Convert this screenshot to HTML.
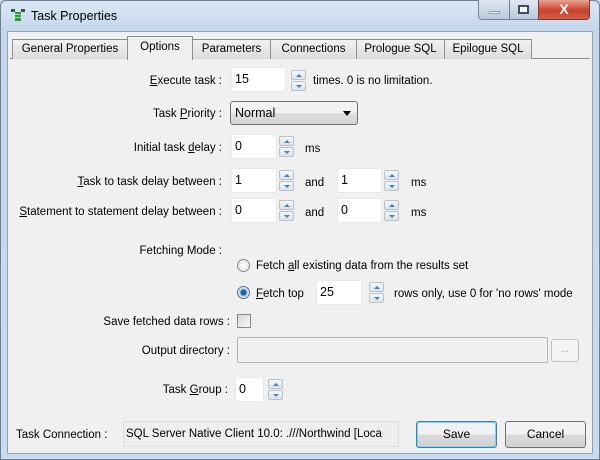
<!DOCTYPE html>
<html><head><style>
*{margin:0;padding:0;box-sizing:border-box}
body{width:600px;height:460px;overflow:hidden;background:#c9dbee;font-family:"Liberation Sans",sans-serif;font-size:11.5px;line-height:17px;color:#000;position:relative}
.a{position:absolute;white-space:nowrap}
.r{text-align:right}
.in{position:absolute;background:#fff;border:1px solid #e6e9ee;padding:2px 3px;font-size:12.5px;line-height:18px}
.sp{position:absolute;width:15px}
.sp div{height:10px;border:1px solid #b8c2cc;background:linear-gradient(#f4f6f8,#dde3ea);border-radius:2px;margin-bottom:1px;position:relative}
.sp div:after{content:"";position:absolute;left:4px;top:3px;border-left:3px solid transparent;border-right:3px solid transparent}
.sp .u:after{border-bottom:3px solid #4a7fb8}
.sp .d:after{border-top:3px solid #4a7fb8}
.tab{position:absolute;top:39px;height:20px;border:1px solid #8d8d8d;border-bottom:none;background:linear-gradient(#f2f2f2,#dcdcdc);text-align:center;line-height:19px}
.btn{position:absolute;border:1px solid #707070;border-radius:3px;background:linear-gradient(#f2f2f2 50%,#dcdcdc 50%,#cfcfcf);text-align:center;font-size:12px}
u{text-decoration:underline}
</style></head><body>
<div class="a" style="left:0;top:0;width:600px;height:460px;border:1px solid #6b7f95;border-radius:6px 6px 0 0;background:linear-gradient(#dbe8f6,#c3d6ec 30px,#c9dbee)"></div>
<svg class="a" style="left:10px;top:8px" width="16" height="14"><rect x="5" y="4" width="6" height="9" fill="#2f9a3a"/><rect x="5" y="6" width="6" height="1" fill="#9fe08f"/><rect x="5" y="9" width="6" height="1" fill="#9fe08f"/><rect x="1" y="1" width="4" height="3" fill="#2c5b3a"/><rect x="11" y="1" width="4" height="3" fill="#2c5b3a"/></svg>
<div class="a" style="left:31px;top:8px;font-size:12.5px">Task Properties</div>
<div class="a" style="left:478px;top:0;width:32px;height:20px;border:1px solid #6f829a;border-top:none;border-radius:0 0 0 4px;background:linear-gradient(#dfe8f2,#b9c9da)"><div class="a" style="left:10px;top:11px;width:11px;height:3px;background:#fff;border:1px solid #8a9bb0"></div></div>
<div class="a" style="left:510px;top:0;width:28px;height:20px;border-bottom:1px solid #6f829a;background:linear-gradient(#dfe8f2,#b9c9da)"><div class="a" style="left:8px;top:5px;width:11px;height:9px;border:2px solid #3c4c62;background:#fff"></div></div>
<div class="a" style="left:538px;top:0;width:52px;height:20px;border:1px solid #7a3a2e;border-top:none;border-radius:0 0 4px 0;background:linear-gradient(#e8a493,#c7402a 55%,#d7604a);color:#fff;font-weight:bold;font-size:14px;text-align:center;line-height:18px">X</div>
<div class="a" style="left:7px;top:31px;width:586px;height:423px;background:#f0f0f0;border:1px solid #8fa3b9"></div>
<div class="a" style="left:10px;top:58px;width:580px;height:1px;background:#8d8d8d"></div>
<div class="tab" style="left:12px;width:116px">General Properties</div>
<div class="tab" style="left:192px;width:79px">Parameters</div>
<div class="tab" style="left:270px;width:87px">Connections</div>
<div class="tab" style="left:356px;width:89px">Prologue SQL</div>
<div class="tab" style="left:444px;width:88px">Epilogue SQL</div>
<div class="tab" style="left:127px;top:36px;height:24px;width:66px;background:#f0f0f0;line-height:20px">Options</div>

<div class="a r" style="right:378px;top:73px"><u>E</u>xecute task :</div>
<div class="in" style="left:231px;top:67px;width:55px;height:25px">15</div>
<div class="sp" style="left:291px;top:70px"><div class="u"></div><div class="d"></div></div>
<div class="a" style="left:313px;top:73px">times. 0 is no limitation.</div>

<div class="a r" style="right:378px;top:106px">Task <u>P</u>riority :</div>
<div class="a" style="left:230px;top:101px;width:128px;height:24px;border:1px solid #707070;border-radius:3px;background:linear-gradient(#f2f2f2 50%,#e0e0e0 50%,#d4d4d4);padding:4px 4px;font-size:12.5px;line-height:15px">Normal<span class="a" style="right:6px;top:9px;border-left:4px solid transparent;border-right:4px solid transparent;border-top:5px solid #000"></span></div>

<div class="a r" style="right:378px;top:140px">Initial task <u>d</u>elay :</div>
<div class="in" style="left:231px;top:134px;width:46px;height:25px">0</div>
<div class="sp" style="left:279px;top:136px"><div class="u"></div><div class="d"></div></div>
<div class="a" style="left:305px;top:141px">ms</div>

<div class="a r" style="right:378px;top:174px"><u>T</u>ask to task delay between :</div>
<div class="in" style="left:231px;top:168px;width:46px;height:25px">1</div>
<div class="sp" style="left:279px;top:170px"><div class="u"></div><div class="d"></div></div>
<div class="a" style="left:305px;top:175px">and</div>
<div class="in" style="left:337px;top:168px;width:45px;height:25px">1</div>
<div class="sp" style="left:384px;top:170px"><div class="u"></div><div class="d"></div></div>
<div class="a" style="left:411px;top:175px">ms</div>

<div class="a r" style="right:378px;top:204px"><u>S</u>tatement to statement delay between :</div>
<div class="in" style="left:231px;top:198px;width:46px;height:25px">0</div>
<div class="sp" style="left:279px;top:200px"><div class="u"></div><div class="d"></div></div>
<div class="a" style="left:305px;top:205px">and</div>
<div class="in" style="left:337px;top:198px;width:45px;height:25px">0</div>
<div class="sp" style="left:384px;top:200px"><div class="u"></div><div class="d"></div></div>
<div class="a" style="left:411px;top:205px">ms</div>

<div class="a r" style="right:378px;top:243px">Fetching Mode :</div>
<div class="a" style="left:237px;top:259px;width:13px;height:13px;border-radius:50%;border:1px solid #8a8a8a;background:radial-gradient(#fff,#dcdcdc)"></div>
<div class="a" style="left:256px;top:258px">Fetch <u>a</u>ll existing data from the results set</div>
<div class="a" style="left:237px;top:286px;width:13px;height:13px;border-radius:50%;border:1px solid #5a6d85;background:radial-gradient(#1c5fa8 30%,#9fc0e0 45%,#eef3f8 70%)"></div>
<div class="a" style="left:256px;top:286px"><u>F</u>etch top</div>
<div class="in" style="left:316px;top:280px;width:46px;height:25px">25</div>
<div class="sp" style="left:369px;top:282px"><div class="u"></div><div class="d"></div></div>
<div class="a" style="left:394px;top:286px">rows only, use 0 for 'no rows' mode</div>

<div class="a r" style="right:370px;top:314px">Save fetched data rows :</div>
<div class="a" style="left:237px;top:314px;width:14px;height:14px;border:1px solid #8a8a8a;background:linear-gradient(135deg,#d8d8d8,#f8f8f8)"></div>

<div class="a r" style="right:370px;top:343px">Output directory :</div>
<div class="a" style="left:237px;top:337px;width:311px;height:26px;border:1px solid #b5b5b5;border-radius:2px;background:#f0f0f0"></div>
<div class="a" style="left:551px;top:339px;width:28px;height:23px;border:1px solid #c0c0c0;border-radius:3px;background:#f4f4f4;color:#999;text-align:center;font-size:10px;line-height:20px">...</div>

<div class="a r" style="right:372px;top:382px">Task <u>G</u>roup :</div>
<div class="in" style="left:235px;top:377px;width:29px;height:25px">0</div>
<div class="sp" style="left:268px;top:379px"><div class="u"></div><div class="d"></div></div>

<div class="a" style="left:16px;top:427px">Task Connection :</div>
<div class="a" style="left:123px;top:421px;width:276px;height:26px;background:#eeeeee;border:1px solid #dcdcdc;padding:4px 2px;line-height:16px;overflow:hidden">SQL Server Native Client 10.0: .///Northwind [Loca</div>
<div class="btn" style="left:416px;top:421px;width:81px;height:27px;border-color:#3c7fb1;box-shadow:inset 0 0 0 1px #7fd3f5;line-height:25px">Save</div>
<div class="btn" style="left:505px;top:421px;width:81px;height:27px;line-height:25px">Cancel</div>
</body></html>
